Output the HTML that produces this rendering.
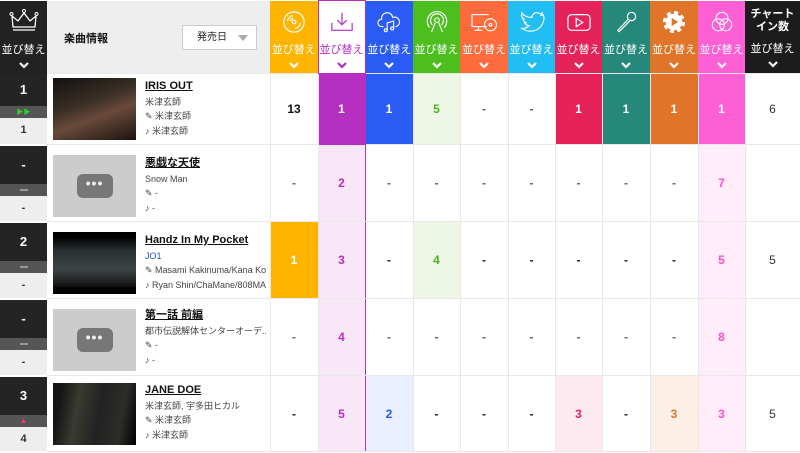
<!DOCTYPE html>
<html><head><meta charset="utf-8"><style>
*{margin:0;padding:0;box-sizing:border-box}
body{width:800px;height:450px;overflow:hidden;background:#fff;font-family:"Liberation Sans","Noto Sans CJK JP",sans-serif}
table{border-collapse:collapse;table-layout:fixed;width:800px}
td{border:1px solid #e8e8e8;text-align:center;vertical-align:middle;font-size:12px;font-weight:bold;color:#666;padding:0}
tr.h td{height:73px;color:#fff;font-weight:normal;font-size:11px;border:none;vertical-align:top;padding-top:9px}
tr.h td svg:first-child{display:block;margin:0 auto}
.sort{display:block;margin-top:7px;font-size:11px}
.chev{display:block;margin:4px auto 0;width:12px;height:8px}
td.rank{background:#eee;padding:0;vertical-align:top;border:none;border-bottom:2px solid #fff}
.rk{background:#242424;color:#fff;font-size:13px;font-weight:bold;display:flex;align-items:center;justify-content:center}
.st{background:#555;height:12px;display:flex;align-items:center;justify-content:center}
.pv{height:24px;display:flex;align-items:center;justify-content:center;color:#333;font-size:11px;font-weight:bold}
td.info{text-align:left;vertical-align:top;position:relative;border-left:none}
.th{position:absolute;left:6px;width:83px;height:62px;background:#000}
.ph{background:#ccc;display:flex;align-items:center;justify-content:center}
.ph div{width:36px;height:24px;border-radius:6px;background:#777;color:#eee;font-size:14px;line-height:18px;text-align:center;letter-spacing:1px}
.tx{position:absolute;left:98px;right:4px;font-weight:normal;color:#444;font-size:9px;line-height:14.5px;white-space:nowrap;overflow:hidden}
.tx b{display:block;color:#111;font-size:11px;text-decoration:underline;margin-bottom:1px}
.w{color:#fff}
</style></head><body>
<table>
<colgroup><col style="width:47px"><col style="width:223px"><col style="width:48px"><col style="width:47px"><col style="width:48px"><col style="width:47px"><col style="width:48px"><col style="width:47px"><col style="width:47px"><col style="width:48px"><col style="width:48px"><col style="width:47px"><col style="width:55px"></colgroup>
<tr class="h">
<td style="background:#222;padding-top:8px"><svg width="30" height="22" viewBox="0 0 30 22"><path d="M4 18 L3 7 L9 12 L15 4 L21 12 L27 7 L26 18 Z M4 21 H26" fill="none" stroke="#fff" stroke-width="1.3"/><circle cx="2.5" cy="5" r="1.5" fill="none" stroke="#fff"/><circle cx="15" cy="2" r="1.5" fill="none" stroke="#fff"/><circle cx="27.5" cy="5" r="1.5" fill="none" stroke="#fff"/></svg><span class="sort" style="margin-top:10px">並び替え</span><svg class="chev" viewBox="0 0 12 8"><path d="M2 2l4 4 4-4" stroke="#fff" stroke-width="2.2" fill="none"/></svg></td>
<td style="background:#eee;color:#111;text-align:left;position:relative"><span style="position:absolute;left:17px;top:29px;font-weight:bold;font-size:11px">楽曲情報</span><span style="position:absolute;left:135px;top:24px;width:75px;height:25px;background:#fff;border:1px solid #ccc;color:#222;font-size:10px;line-height:23px;padding-left:14px">発売日<span style="position:absolute;right:8px;top:9px;border:5px solid transparent;border-top:6px solid #aaa"></span></span></td>
<td style="background:#ffb400"><svg width="24" height="24" viewBox="0 0 26 26" fill="none" stroke="#fff" stroke-width="1.3"><circle cx="13" cy="13" r="11"/><circle cx="13" cy="13" r="2"/><path d="M6 12a7 7 0 0 1 6-6M9 12a4 4 0 0 1 3-3M20 14a7 7 0 0 1-6 6"/></svg><span class="sort">並び替え</span><svg class="chev" viewBox="0 0 12 8"><path d="M2 2l4 4 4-4" stroke="#fff" stroke-width="2.2" fill="none"/></svg></td>
<td style="background:#fff;color:#b52fc0;border:1px solid #b52fc0"><svg width="24" height="24" viewBox="0 0 26 26" fill="none" stroke="#b52fc0" stroke-width="1.3"><path d="M13 3v13M8 11l5 5 5-5M2 14v8h22v-8"/></svg><span class="sort">並び替え</span><svg class="chev" viewBox="0 0 12 8"><path d="M2 2l4 4 4-4" stroke="#b52fc0" stroke-width="2.2" fill="none"/></svg></td>
<td style="background:#2a5cf5"><svg width="24" height="24" viewBox="0 0 26 26" fill="none" stroke="#fff" stroke-width="1.2"><path d="M7 18H5a4 4 0 0 1 0-8 6 6 0 0 1 12-2 5 5 0 0 1 4 10h-1"/><path d="M11 22V14l7-2v8"/><circle cx="9.5" cy="22" r="1.6"/><circle cx="16.5" cy="20" r="1.6"/></svg><span class="sort">並び替え</span><svg class="chev" viewBox="0 0 12 8"><path d="M2 2l4 4 4-4" stroke="#fff" stroke-width="2.2" fill="none"/></svg></td>
<td style="background:#4cbf1f"><svg width="24" height="24" viewBox="0 0 26 26" fill="none" stroke="#fff" stroke-width="1.3"><circle cx="13" cy="11" r="2.5"/><path d="M8 16a7 7 0 1 1 10 0M5 19a10.5 10.5 0 1 1 16 0M11 14l-4 10M15 14l4 10"/></svg><span class="sort">並び替え</span><svg class="chev" viewBox="0 0 12 8"><path d="M2 2l4 4 4-4" stroke="#fff" stroke-width="2.2" fill="none"/></svg></td>
<td style="background:#ff6b3d"><svg width="28" height="24" viewBox="0 0 30 26" fill="none" stroke="#fff" stroke-width="1.2"><path d="M20 5H2v13h16M9 18v4M5 22h8"/><circle cx="22" cy="16" r="6.5"/><circle cx="22" cy="16" r="1.5"/></svg><span class="sort">並び替え</span><svg class="chev" viewBox="0 0 12 8"><path d="M2 2l4 4 4-4" stroke="#fff" stroke-width="2.2" fill="none"/></svg></td>
<td style="background:#21bdf3"><svg width="26" height="24" viewBox="0 0 28 26" fill="none" stroke="#fff" stroke-width="1.2"><path d="M26 5a9 9 0 0 1-3 1 4 4 0 0 0 2-3 9 9 0 0 1-3 1 5 5 0 0 0-8 4C9 8 5 6 3 3c-1 3 0 6 3 7-1 0-2 0-2-1 0 2 2 4 4 5h-2c1 2 3 3 5 3-2 2-5 3-8 3 3 2 6 3 9 3 10 0 15-8 15-15z"/></svg><span class="sort">並び替え</span><svg class="chev" viewBox="0 0 12 8"><path d="M2 2l4 4 4-4" stroke="#fff" stroke-width="2.2" fill="none"/></svg></td>
<td style="background:#e5235a"><svg width="26" height="24" viewBox="0 0 28 26" fill="none" stroke="#fff" stroke-width="1.3"><rect x="2" y="5" width="24" height="17" rx="4"/><path d="M11 9v9l7-4.5z"/></svg><span class="sort">並び替え</span><svg class="chev" viewBox="0 0 12 8"><path d="M2 2l4 4 4-4" stroke="#fff" stroke-width="2.2" fill="none"/></svg></td>
<td style="background:#26887a"><svg width="24" height="24" viewBox="0 0 26 26" fill="none" stroke="#fff" stroke-width="1.3"><circle cx="19" cy="7" r="4.5"/><path d="M15.5 10L4 22l1.5 1.5L17 12"/></svg><span class="sort">並び替え</span><svg class="chev" viewBox="0 0 12 8"><path d="M2 2l4 4 4-4" stroke="#fff" stroke-width="2.2" fill="none"/></svg></td>
<td style="background:#e07428"><svg width="24" height="24" viewBox="0 0 26 26"><circle cx="13" cy="13" r="10.5" fill="none" stroke="#fff" stroke-width="3" stroke-dasharray="4.5 3.7"/><circle cx="13" cy="13" r="9" fill="#fff"/><path d="M10.5 8.5v9l7-4.5z" fill="#e07428"/></svg><span class="sort">並び替え</span><svg class="chev" viewBox="0 0 12 8"><path d="M2 2l4 4 4-4" stroke="#fff" stroke-width="2.2" fill="none"/></svg></td>
<td style="background:#ff5fd4"><svg width="24" height="24" viewBox="0 0 26 26" fill="none" stroke="#fff" stroke-width="1.2"><circle cx="13" cy="9" r="6.5"/><circle cx="9" cy="16" r="6.5"/><circle cx="17" cy="16" r="6.5"/></svg><span class="sort">並び替え</span><svg class="chev" viewBox="0 0 12 8"><path d="M2 2l4 4 4-4" stroke="#fff" stroke-width="2.2" fill="none"/></svg></td>
<td style="background:#1c1c1c;font-weight:bold;font-size:11px;line-height:13px;padding-top:7px">チャート<br>イン数<span class="sort" style="margin-top:9px;font-weight:normal">並び替え</span><svg class="chev" viewBox="0 0 12 8"><path d="M2 2l4 4 4-4" stroke="#fff" stroke-width="2.2" fill="none"/></svg></td>
</tr>
<tr style="height:71px">
<td class="rank"><div class="rk" style="height:32px">1</div><div class="st"><span style="color:#3c3;font-size:7px">▶▶</span></div><div class="pv">1</div></td>
<td class="info"><div class="th" style="top:4px;background:linear-gradient(160deg,#111 0%,#3a2f25 40%,#6a4a3a 60%,#1a1410 100%)"></div><div class="tx" style="top:5px"><b>IRIS OUT</b>米津玄師<br>✎ 米津玄師<br>♪ 米津玄師</div></td>
<td style="color:#111">13</td><td style="background:#b52fc0;border-color:#b52fc0" class="w">1</td><td style="background:#2a5cf5" class="w">1</td><td style="background:#eef7e6;color:#4cb31f">5</td><td>-</td><td>-</td><td style="background:#e5235a" class="w">1</td><td style="background:#26887a" class="w">1</td><td style="background:#e07428" class="w">1</td><td style="background:#ff5fd4" class="w">1</td><td style="font-weight:normal;color:#333">6</td>
</tr>
<tr style="height:77px">
<td class="rank"><div class="rk" style="height:38px">-</div><div class="st"><span style="display:block;width:8px;height:2px;background:#999"></span></div><div class="pv">-</div></td>
<td class="info"><div class="th ph" style="top:10px"><div>•••</div></div><div class="tx" style="top:11px"><b>悪戯な天使</b>Snow Man<br>✎ -<br>♪ -</div></td>
<td>-</td><td style="background:#f8e8f7;color:#b52fc0;border-left:1px solid #b52fc0;border-right:1px solid #b52fc0">2</td><td>-</td><td>-</td><td>-</td><td>-</td><td>-</td><td>-</td><td>-</td><td style="background:#ffedf9;color:#ff4fcf">7</td><td></td>
</tr>
<tr style="height:77px">
<td class="rank"><div class="rk" style="height:38px">2</div><div class="st"><span style="display:block;width:8px;height:2px;background:#999"></span></div><div class="pv">-</div></td>
<td class="info"><div class="th" style="top:10px;background:linear-gradient(180deg,#000 8%,#2a3032 30%,#3e4446 60%,#111 88%,#000 90%)"></div><div class="tx" style="top:11px"><b>Handz In My Pocket</b><span style="color:#1a56c0">JO1</span><br>✎ Masami Kakinuma/Kana Koi...<br>♪ Ryan Shin/ChaMane/808MA...</div></td>
<td style="background:#ffb400" class="w">1</td><td style="background:#f8e8f7;color:#b52fc0;border-left:1px solid #b52fc0;border-right:1px solid #b52fc0">3</td><td style="color:#222">-</td><td style="background:#eef7e6;color:#4cb31f">4</td><td style="color:#222">-</td><td style="color:#222">-</td><td style="color:#222">-</td><td style="color:#222">-</td><td style="color:#222">-</td><td style="background:#ffedf9;color:#ff4fcf">5</td><td style="font-weight:normal;color:#333">5</td>
</tr>
<tr style="height:77px">
<td class="rank"><div class="rk" style="height:38px">-</div><div class="st"><span style="display:block;width:8px;height:2px;background:#999"></span></div><div class="pv">-</div></td>
<td class="info"><div class="th ph" style="top:10px"><div>•••</div></div><div class="tx" style="top:9px"><b>第一話 前編</b>都市伝説解体センターオーデ...<br>✎ -<br>♪ -</div></td>
<td>-</td><td style="background:#f8e8f7;color:#b52fc0;border-left:1px solid #b52fc0;border-right:1px solid #b52fc0">4</td><td>-</td><td>-</td><td>-</td><td>-</td><td>-</td><td>-</td><td>-</td><td style="background:#ffedf9;color:#ff4fcf">8</td><td></td>
</tr>
<tr style="height:76px">
<td class="rank"><div class="rk" style="height:38px">3</div><div class="st"><span style="color:#f36;font-size:8px">▲</span></div><div class="pv">4</div></td>
<td class="info"><div class="th" style="top:7px;background:linear-gradient(100deg,#151515 10%,#3a3a30 30%,#222 55%,#2c2c28 80%,#000 100%)"></div><div class="tx" style="top:7px"><b>JANE DOE</b>米津玄師, 宇多田ヒカル<br>✎ 米津玄師<br>♪ 米津玄師</div></td>
<td style="color:#222">-</td><td style="background:#f8e8f7;color:#b52fc0;border-left:1px solid #b52fc0;border-right:1px solid #b52fc0">5</td><td style="background:#e9effe;color:#2a5cf5">2</td><td style="color:#222">-</td><td style="color:#222">-</td><td style="color:#222">-</td><td style="background:#fdeaf0;color:#e5235a">3</td><td style="color:#222">-</td><td style="background:#fcefe6;color:#e07428">3</td><td style="background:#ffedf9;color:#ff4fcf">3</td><td style="font-weight:normal;color:#333">5</td>
</tr>
</table>
</body></html>
